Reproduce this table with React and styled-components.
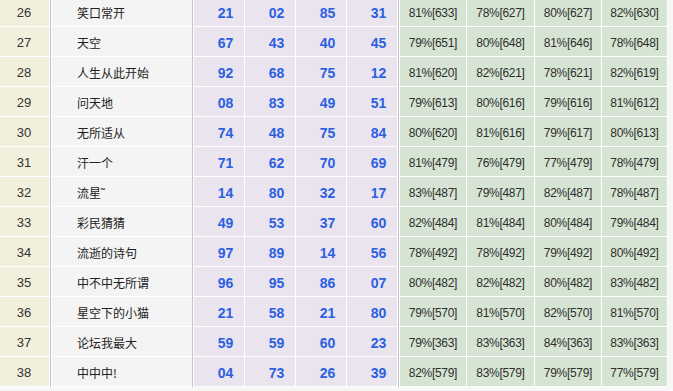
import React from "react";
import styled, { createGlobalStyle } from "styled-components";

const Global = createGlobalStyle`
  html, body { margin: 0; padding: 0; background: #f7f7f7; overflow: hidden; }
  body { font-family: "Liberation Sans", "Noto Sans CJK SC", sans-serif; }
`;

const Table = styled.div`
  display: flex;
  flex-direction: column;
  margin-top: -3px;
  width: 673px;
`;

const Row = styled.div`
  display: flex;
  height: 30px;
`;

const Cell = styled.div`
  box-sizing: border-box;
  height: 30px;
  border-bottom: 1px solid #ffffff;
  display: flex;
  align-items: center;
  padding-top: 2px;
`;

const NoCell = styled(Cell)`
  width: 50px;
  background: #f2f0dc;
  border-right: 1px solid #ffffff;
  justify-content: center;
  font-size: 13px;
  color: #333333;
  padding-right: 1px;
`;

const VLine = styled.div`
  width: 1px;
  height: 30px;
  background: ${(p) => p.$c || "#c4c4c4"};
`;

const NameCell = styled(Cell)`
  width: 141px;
  background: #f4f4f4;
  border-left: 1px solid #ffffff;
  padding-left: 25px;
  font-family: "Noto Sans CJK SC", sans-serif;
  font-size: 12px;
  color: #222222;
`;

const Group = styled.div`
  display: flex;
  border-left: 1px solid #ffffff;
`;

const BallCell = styled(Cell)`
  width: 51px;
  background: #e9e4ee;
  border-right: 1px solid #ffffff;
  justify-content: center;
  padding-left: 13px;
  font-weight: bold;
  font-size: 14px;
  color: #2c5fe2;
`;

const RateCell = styled(Cell)`
  width: ${(p) => p.$w}px;
  background: #d6e5d3;
  border-right: 1px solid #ffffff;
  justify-content: center;
  font-size: 12px;
  letter-spacing: -0.3px;
  color: #2e2e2e;
`;

const data = [
  [26, "笑口常开", ["21", "02", "85", "31"], ["81%[633]", "78%[627]", "80%[627]", "82%[630]"]],
  [27, "天空", ["67", "43", "40", "45"], ["79%[651]", "80%[648]", "81%[646]", "78%[648]"]],
  [28, "人生从此开始", ["92", "68", "75", "12"], ["81%[620]", "82%[621]", "78%[621]", "82%[619]"]],
  [29, "问天地", ["08", "83", "49", "51"], ["79%[613]", "80%[616]", "79%[616]", "81%[612]"]],
  [30, "无所适从", ["74", "48", "75", "84"], ["80%[620]", "81%[616]", "79%[617]", "80%[613]"]],
  [31, "汗一个", ["71", "62", "70", "69"], ["81%[479]", "76%[479]", "77%[479]", "78%[479]"]],
  [32, "流星˜", ["14", "80", "32", "17"], ["83%[487]", "79%[487]", "82%[487]", "78%[487]"]],
  [33, "彩民猜猜", ["49", "53", "37", "60"], ["82%[484]", "81%[484]", "80%[484]", "79%[484]"]],
  [34, "流逝的诗句", ["97", "89", "14", "56"], ["78%[492]", "78%[492]", "79%[492]", "80%[492]"]],
  [35, "中不中无所谓", ["96", "95", "86", "07"], ["80%[482]", "82%[482]", "80%[482]", "83%[482]"]],
  [36, "星空下的小猫", ["21", "58", "21", "80"], ["79%[570]", "81%[570]", "82%[570]", "81%[570]"]],
  [37, "论坛我最大", ["59", "59", "60", "23"], ["79%[363]", "83%[363]", "84%[363]", "83%[363]"]],
  [38, "中中中!", ["04", "73", "26", "39"], ["82%[579]", "83%[579]", "79%[579]", "77%[579]"]],
];

const rateW = [67, 68, 67, 66];

export default function App() {
  return (
    <>
      <Global />
      <Table>
        {data.map(([no, name, balls, rates]) => (
          <Row key={no}>
            <NoCell>{no}</NoCell>
            <VLine />
            <NameCell>{name}</NameCell>
            <VLine />
            <Group>
              {balls.map((b, i) => (
                <BallCell key={i}>{b}</BallCell>
              ))}
            </Group>
            <VLine />
            <Group>
              {rates.map((r, i) => (
                <RateCell key={i} $w={rateW[i]}>{r}</RateCell>
              ))}
            </Group>
          </Row>
        ))}
      </Table>
    </>
  );
}
